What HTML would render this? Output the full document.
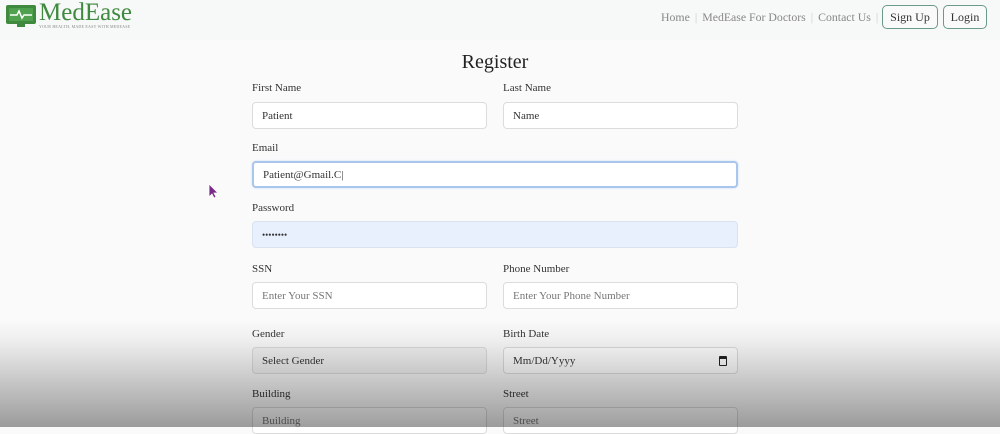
<!DOCTYPE html>
<html><head><meta charset="utf-8"><style>
*{box-sizing:border-box;margin:0;padding:0}
body{width:1000px;height:427px;overflow:hidden;background:#fafafa;font-family:"Liberation Serif",serif;color:#333;position:relative}
.nav{position:absolute;left:0;top:0;width:1000px;height:40px;background:#f7f8f8}
.logo{position:absolute;left:5px;top:3px}
.brand{position:absolute;left:39px;top:-1px;font-size:25px;color:#3f8a3f}
.tag{position:absolute;left:39px;top:24px;font-size:4px;color:#888;letter-spacing:.2px}
.links{position:absolute;left:661px;top:10px;font-size:11.8px;color:#888}
.links span{color:#ccc;margin:0 5px}
.btn{position:absolute;top:5px;height:24px;border:1px solid #6a9a8a;border-radius:5px;font-size:12px;color:#333;text-align:center;line-height:22px;background:#fafafa}
h1{position:absolute;left:0;width:990px;text-align:center;top:51px;font-size:20px;font-weight:normal;color:#222}
.l{position:absolute;font-size:11px;color:#333}
.i{position:absolute;height:27px;border:1px solid #dcdcdc;border-radius:4px;background:#fff;font-size:11px;padding-left:9px;line-height:26px;color:#333}
.ph{color:#777}
.ov{position:absolute;left:0;top:320px;width:1000px;height:107px;background:linear-gradient(rgba(0,0,0,0),rgba(0,0,0,.05) 20%,rgba(0,0,0,.38));pointer-events:none}
</style></head><body>
<div class="nav">
<svg class="logo" width="32" height="26" viewBox="0 0 32 26"><rect x="1" y="2" width="30" height="19" rx="2" fill="#3f8a3f"/><rect x="4" y="5" width="24" height="13" fill="#4fa04f"/><path d="M5 12h7l2-4 3 7 2-3h8" stroke="#fff" stroke-width="1.5" fill="none"/><rect x="12" y="21" width="8" height="3" fill="#3f8a3f"/></svg>
<div class="brand">MedEase</div>
<div class="tag">YOUR HEALTH, MADE EASY WITH MEDEASE</div>
<div class="links">Home<span>|</span>MedEase For Doctors<span>|</span>Contact Us<span>|</span></div>
<div class="btn" style="left:882px;width:56px">Sign Up</div>
<div class="btn" style="left:943px;width:44px">Login</div>
</div>
<h1>Register</h1>
<div class="l" style="left:252px;top:82px">First Name</div>
<div class="l" style="left:503px;top:82px">Last Name</div>
<div class="i" style="left:252px;top:102px;width:235px">Patient</div>
<div class="i" style="left:503px;top:102px;width:235px">Name</div>
<div class="l" style="left:252px;top:142px">Email</div>
<div class="i" style="left:252px;top:161px;width:486px;border:2px solid #a9c6ec;line-height:24px;box-shadow:0 0 2px #c8daf3">Patient@Gmail.C|</div>
<div class="l" style="left:252px;top:202px">Password</div>
<div class="i" style="left:252px;top:221px;width:486px;background:#e8f0fe;border-color:#d8e2f0;font-size:9px">••••••••</div>
<div class="l" style="left:252px;top:263px">SSN</div>
<div class="l" style="left:503px;top:263px">Phone Number</div>
<div class="i ph" style="left:252px;top:282px;width:235px">Enter Your SSN</div>
<div class="i ph" style="left:503px;top:282px;width:235px">Enter Your Phone Number</div>
<div class="l" style="left:252px;top:328px">Gender</div>
<div class="l" style="left:503px;top:328px">Birth Date</div>
<div class="i" style="left:252px;top:347px;width:235px;background:#f2f2f2">Select Gender</div>
<div class="i" style="left:503px;top:347px;width:235px">Mm/Dd/Yyyy<span style="position:absolute;right:10px;top:8px;width:8px;height:10px;border:1.5px solid #222;border-top-width:3px;border-radius:1px"></span></div>
<div class="l" style="left:252px;top:388px">Building</div>
<div class="l" style="left:503px;top:388px">Street</div>
<div class="i ph" style="left:252px;top:407px;width:235px">Building</div>
<div class="i ph" style="left:503px;top:407px;width:235px">Street</div>
<svg style="position:absolute;left:208px;top:183px" width="12" height="16"><path d="M1 1v13l3-3 2 4 2-1-2-4h4z" fill="#7a2a8a" stroke="#fff" stroke-width=".8"/></svg>
<div class="ov"></div>
</body></html>
